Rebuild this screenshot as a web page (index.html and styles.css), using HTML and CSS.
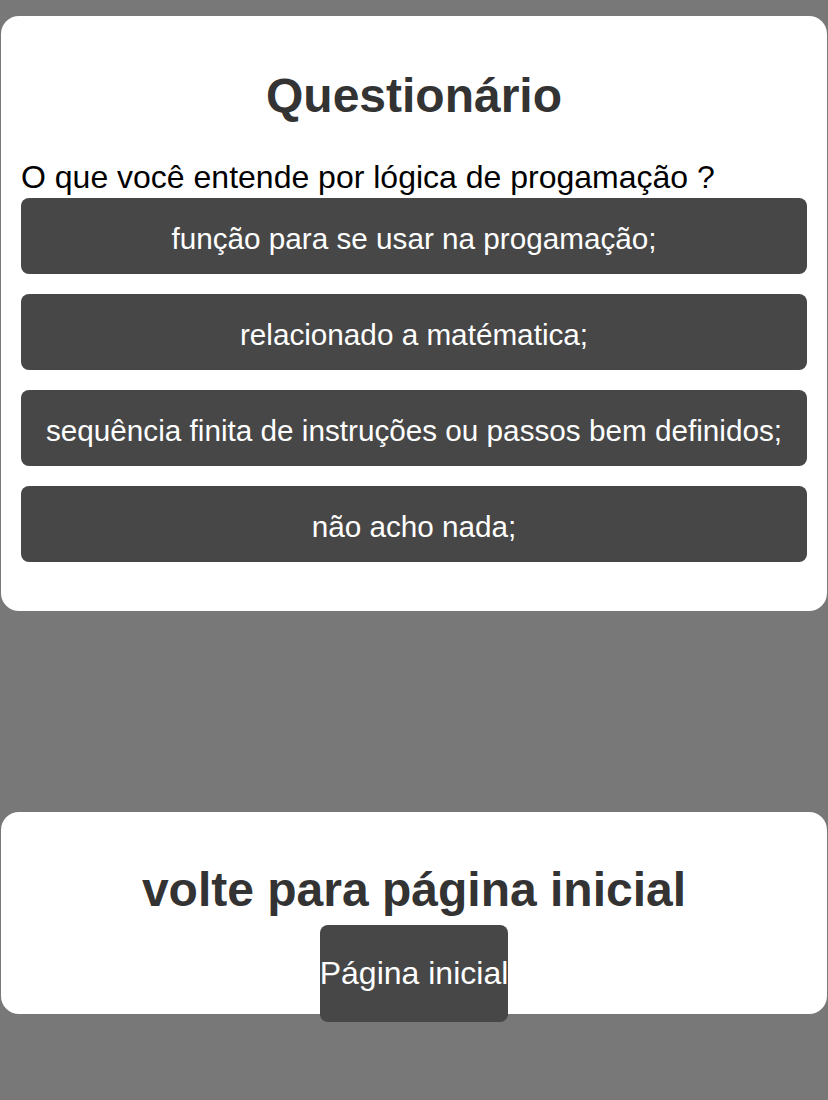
FILE: index.html
```html
<!DOCTYPE html>
<html lang="pt">
<head>
<meta charset="utf-8">
<title>Questionário</title>
<link rel="stylesheet" href="styles.css">
</head>
<body>
<main class="page">
  <section class="card quiz">
    <h1 class="title">Questionário</h1>
    <p class="question">O que você entende por lógica de progamação ?</p>
    <div class="options">
      <button class="option">função para se usar na progamação;</button>
      <button class="option">relacionado a matématica;</button>
      <button class="option">sequência finita de instruções ou passos bem definidos;</button>
      <button class="option">não acho nada;</button>
    </div>
  </section>
  <section class="card home">
    <h2 class="home-title">volte para página inicial</h2>
    <div class="home-action">
      <button class="home-btn">Página inicial</button>
    </div>
  </section>
</main>
</body>
</html>
```
FILE: styles.css
```css
html, body {
  margin: 0;
  padding: 0;
  background: #787878;
  font-family: "Liberation Sans", Arial, sans-serif;
}
html {
  min-height: 100%;
}
body {
  min-height: 100vh;
}
.page {
  display: flex;
  flex-direction: column;
  padding: 16px 1px 0 1px;
  gap: 201px;
}
.card {
  background: #ffffff;
  border-radius: 18px;
}
.quiz {
  display: flex;
  flex-direction: column;
  padding: 0 20px 49px 20px;
}
.title {
  margin: 0;
  padding-top: 52px;
  text-align: center;
  font-size: 48px;
  line-height: 56px;
  font-weight: bold;
  color: #333333;
}
.question {
  margin: 0 0 5px 0;
  padding-top: 37px;
  font-size: 32px;
  line-height: 32px;
  color: #000000;
}
.options {
  display: flex;
  flex-direction: column;
  gap: 20px;
}
.option {
  height: 76px;
  border: none;
  border-radius: 8px;
  background: #474747;
  color: #ffffff;
  font-family: "Liberation Sans", Arial, sans-serif;
  font-size: 29.7px;
  padding: 6px 0 0 0;
}
.home {
  text-align: center;
}
.home-title {
  margin: 0;
  padding: 50px 0 7px 0;
  font-size: 48px;
  line-height: 56px;
  font-weight: bold;
  color: #333333;
}
.home-action {
  height: 89px;
  display: flex;
  justify-content: center;
  align-items: flex-start;
}
.home-btn {
  height: 97px;
  flex: 0 0 auto;
  border: none;
  border-radius: 8px;
  background: #474747;
  color: #ffffff;
  font-family: "Liberation Sans", Arial, sans-serif;
  font-size: 32px;
  padding: 0;
}
```
